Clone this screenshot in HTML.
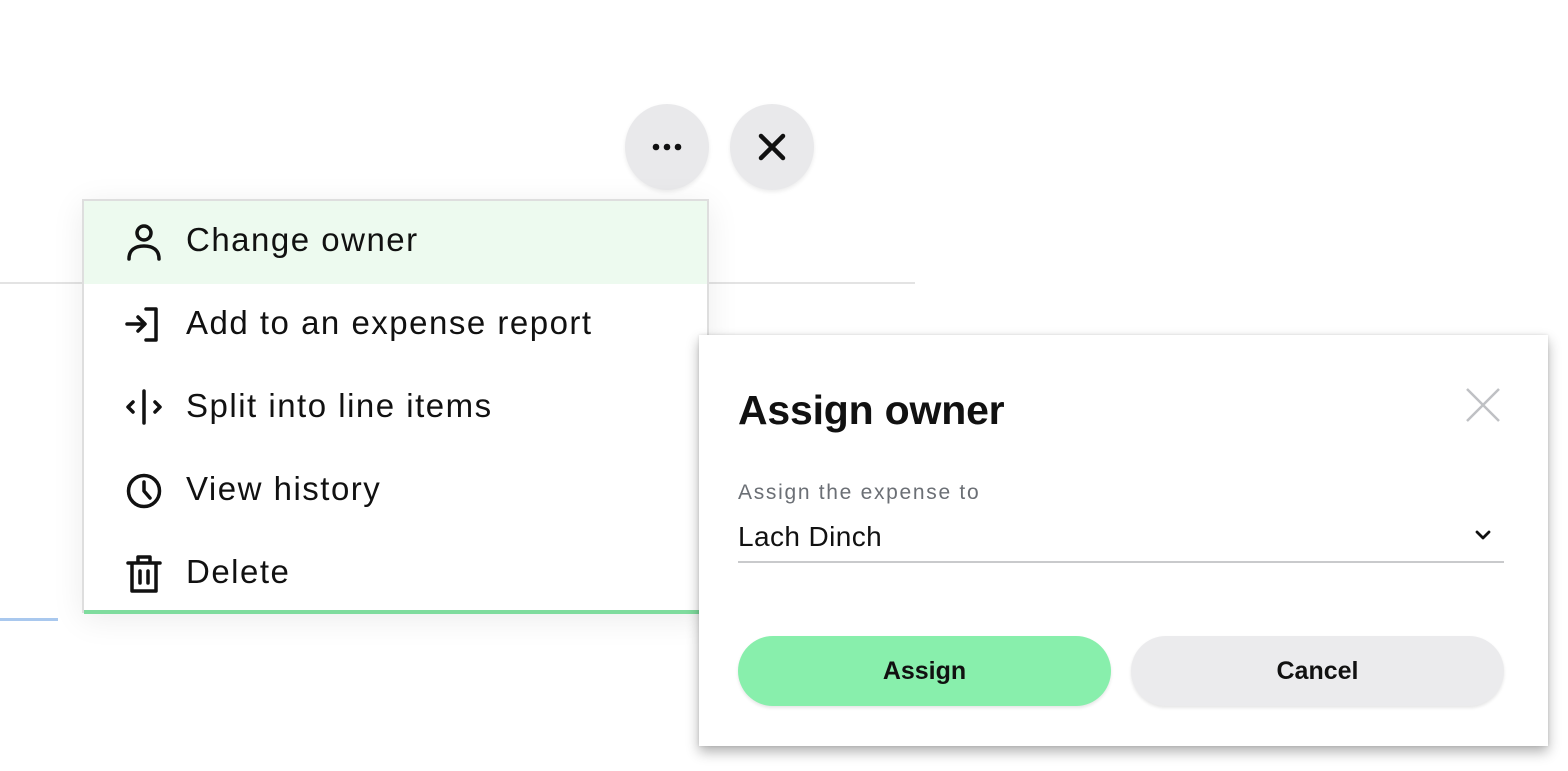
<!DOCTYPE html>
<html><head><style>
body{margin:0;width:1568px;height:771px;background:#fff;position:relative;overflow:hidden;font-family:"Liberation Sans",sans-serif;color:#111}
.abs{position:absolute}
.circ{position:absolute;top:104px;width:84px;height:86px;border-radius:50%;background:#e9e9eb;box-shadow:0 2px 4px rgba(0,0,0,.08)}
.menu{left:82px;top:199px;width:623px;height:412px;border:2px solid #dedede;border-bottom:none;background:#fff;box-shadow:0 6px 30px rgba(0,0,0,.08)}
.row{position:absolute;left:0;width:623px;height:83px}
.row span{position:absolute;left:102px;top:20px;font-size:33px;letter-spacing:1.5px}
.row svg{position:absolute;left:40px;top:20px}
.dlg{left:699px;top:335px;width:849px;height:411px;background:#fff;box-shadow:0 6px 12px rgba(0,0,0,.3),0 0 3px rgba(0,0,0,.12)}
.btn{position:absolute;top:301px;height:70px;width:373px;border-radius:35px;font-size:25px;font-weight:bold;text-align:center;line-height:70px;box-shadow:0 2px 3px rgba(0,0,0,.1)}
</style></head><body>
<div class="abs" style="left:0;top:282px;width:915px;height:2px;background:#e3e3e3"></div>
<div class="abs" style="left:0;top:618px;width:58px;height:3px;background:#a9c8ee"></div>
<div class="circ" style="left:625px"><svg width="84" height="86"><circle cx="31" cy="43" r="3.3" fill="#111"/><circle cx="42" cy="43" r="3.3" fill="#111"/><circle cx="53" cy="43" r="3.3" fill="#111"/></svg></div>
<div class="circ" style="left:730px"><svg width="84" height="86"><path d="M31 32L53 54M53 32L31 54" stroke="#111" stroke-width="4.5" stroke-linecap="round"/></svg></div>
<div class="abs menu">
 <div class="row" style="top:0;background:#edfaef"><svg width="40" height="40" fill="none" stroke="#111" stroke-width="3.5" stroke-linecap="round"><circle cx="20" cy="12" r="7"/><path d="M5 38C5 29 11 25 20 25S35 29 35 38"/></svg><span>Change owner</span></div>
 <div class="row" style="top:83px"><svg width="40" height="40" fill="none" stroke="#111" stroke-width="3.5" stroke-linecap="round" stroke-linejoin="round"><path d="M3 20H20M14 13L21 20L14 27M22 5H32V36H22"/></svg><span>Add to an expense report</span></div>
 <div class="row" style="top:166px"><svg width="40" height="40" fill="none" stroke="#111" stroke-width="3.5" stroke-linecap="round" stroke-linejoin="round"><path d="M20 4V36M9 15L4 20L9 25M31 15L36 20L31 25"/></svg><span>Split into line items</span></div>
 <div class="row" style="top:249px"><svg width="40" height="40" fill="none" stroke="#111" stroke-width="3.5" stroke-linecap="round" stroke-linejoin="round"><circle cx="20" cy="21" r="15.5"/><path d="M20 12V21L26 28"/></svg><span>View history</span></div>
 <div class="row" style="top:332px"><svg width="40" height="42" fill="none" stroke="#111" stroke-width="3.5" stroke-linecap="round" stroke-linejoin="round"><path d="M4 10H36M14 10V4H26V10M8 10V38H32V10M16 18V30M24 18V30"/></svg><span>Delete</span></div>
 <div class="abs" style="left:0;top:409px;width:623px;height:4px;background:#7fdc9e"></div>
</div>
<div class="abs dlg">
 <div class="abs" style="left:39px;top:52px;font-size:41px;font-weight:bold;letter-spacing:-.2px">Assign owner</div>
 <svg class="abs" style="left:766px;top:52px" width="36" height="36"><path d="M2 2L34 34M34 2L2 34" stroke="#bfc1c4" stroke-width="2.5"/></svg>
 <div class="abs" style="left:39px;top:146px;font-size:21px;letter-spacing:1.7px;color:#6b6f75">Assign the expense to</div>
 <div class="abs" style="left:39px;top:186px;font-size:28px;letter-spacing:.4px">Lach Dinch</div>
 <svg class="abs" style="left:775px;top:193px" width="18" height="14"><path d="M3 4L9 10L15 4" fill="none" stroke="#111" stroke-width="2.8" stroke-linecap="round" stroke-linejoin="round"/></svg>
 <div class="abs" style="left:39px;top:226px;width:766px;height:2px;background:#c9cacc"></div>
 <div class="btn" style="left:39px;background:#88efac">Assign</div>
 <div class="btn" style="left:432px;background:#ebebed">Cancel</div>
</div>
</body></html>
